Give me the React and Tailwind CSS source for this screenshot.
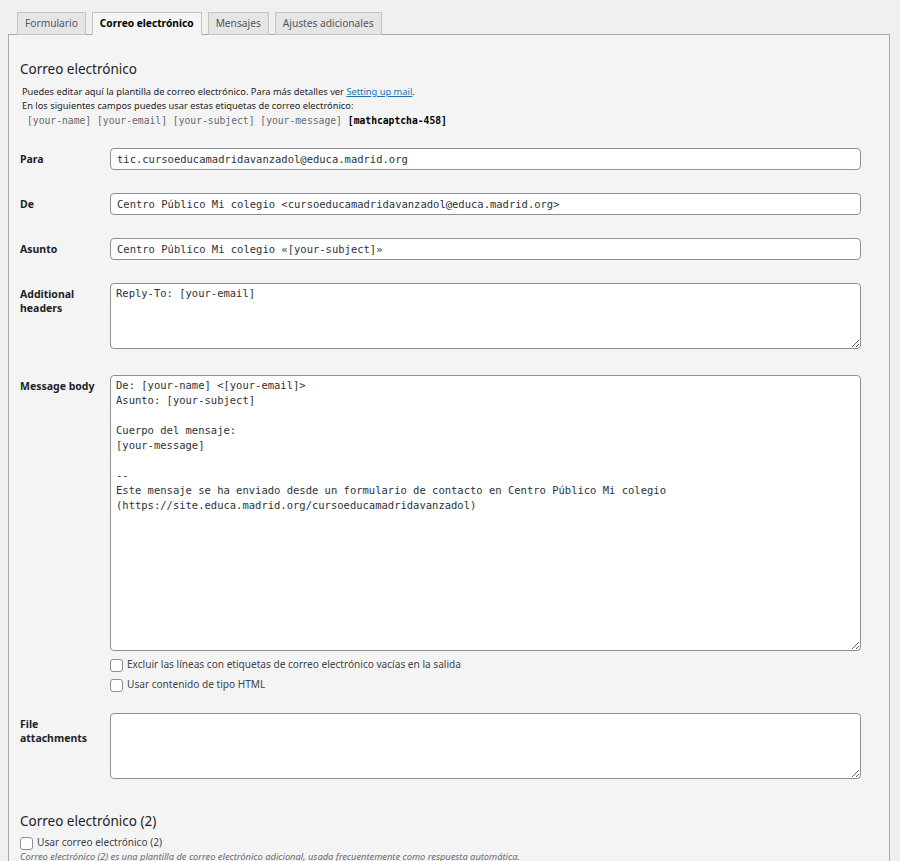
import React from "react";

const sans = { fontFamily: '"Noto Sans", "Open Sans", sans-serif' };
const mono = { fontFamily: '"DejaVu Sans Mono", "Liberation Mono", monospace' };

const tabs = ["Formulario", "Correo electrónico", "Mensajes", "Ajustes adicionales"];

const Field = ({ label, children, className = "" }) => (
  <div className={"flex " + className}>
    <div className="w-[90px] shrink-0 text-[10.5px] font-bold text-[#1d2327] leading-[14px] pt-[4px]">{label}</div>
    <div className="flex-1">{children}</div>
  </div>
);

const TextInput = ({ value }) => (
  <input
    readOnly
    defaultValue={value}
    style={mono}
    className="block w-full h-[22px] px-[6px] border border-[#8c8f94] rounded-[4px] bg-white text-[10.5px] text-[#2c3338] outline-none"
  />
);

const Area = ({ value, h }) => (
  <textarea
    readOnly
    defaultValue={value}
    style={mono}
    className={"block w-full px-[5px] pt-[2px] border border-[#8c8f94] rounded-[4px] bg-white text-[10.5px] leading-[15px] text-[#2c3338] outline-none " + h}
  />
);

const Check = ({ label }) => (
  <label className="flex items-center h-[14px] gap-[4px] text-[10.1px] text-[#3c434a]">
    <span className="w-[13px] h-[13px] rounded-[3px] border border-[#8c8f94] bg-white" />
    {label}
  </label>
);

const body = `De: [your-name] <[your-email]>
Asunto: [your-subject]

Cuerpo del mensaje:
[your-message]

-- 
Este mensaje se ha enviado desde un formulario de contacto en Centro Público Mi colegio
(https://site.educa.madrid.org/cursoeducamadridavanzadol)`;

export default function App() {
  return (
    <div style={sans} className="bg-[#f0f0f1] h-[861px] overflow-hidden pl-[8px] pr-[10px] pt-[12px]">
      <div className="flex gap-[6px] pl-[9px] relative z-10 -mb-px">
        {tabs.map((t, i) => (
          <div
            key={t}
            className={
              "h-[23px] px-[7px] flex items-center text-[10.2px] border border-[#c3c4c7] " +
              (i === 1
                ? "bg-[#f5f5f5] border-[#a7aaad] border-b-[#f5f5f5] font-bold text-black"
                : "bg-[#e5e5e5] text-[#50575e]")
            }
          >
            {t}
          </div>
        ))}
      </div>
      <div className="border border-[#a7aaad] bg-[#f4f4f4] pl-[11px] pr-[28px] pt-[24px] h-[900px]">
        <h2 className="text-[13.5px] text-[#1d2327] leading-[20px]">Correo electrónico</h2>
        <div className="mt-[6px] pl-[2px] text-[9.3px] leading-[14px] text-[#1d2327]">
          <p>
            Puedes editar aquí la plantilla de correo electrónico. Para más detalles ver{" "}
            <a className="text-[#2271b1] underline">Setting up mail</a>.
          </p>
          <p>En los siguientes campos puedes usar estas etiquetas de correo electrónico:</p>
          <p style={mono} className="text-[9.7px] text-[#646970] pl-[5px] mt-[1px]">
            [your-name] [your-email] [your-subject] [your-message]{" "}
            <b className="text-black">[mathcaptcha-458]</b>
          </p>
        </div>

        <Field label="Para" className="mt-[20px]">
          <TextInput value="tic.cursoeducamadridavanzadol@educa.madrid.org" />
        </Field>
        <Field label="De" className="mt-[23px]">
          <TextInput value="Centro Público Mi colegio <cursoeducamadridavanzadol@educa.madrid.org>" />
        </Field>
        <Field label="Asunto" className="mt-[23px]">
          <TextInput value="Centro Público Mi colegio «[your-subject]»" />
        </Field>
        <Field label={<>Additional<br />headers</>} className="mt-[23px]">
          <Area value="Reply-To: [your-email]" h="h-[66px]" />
        </Field>
        <Field label="Message body" className="mt-[26px]">
          <Area value={body} h="h-[276px]" />
          <div className="mt-[7px] flex flex-col gap-[6px]">
            <Check label="Excluir las líneas con etiquetas de correo electrónico vacías en la salida" />
            <Check label="Usar contenido de tipo HTML" />
          </div>
        </Field>
        <Field label={<>File<br />attachments</>} className="mt-[21px]">
          <Area value="" h="h-[66px]" />
        </Field>

        <h2 className="mt-[32px] text-[13.5px] text-[#1d2327] leading-[20px]">Correo electrónico (2)</h2>
        <div className="mt-[5px]">
          <Check label="Usar correo electrónico (2)" />
        </div>
        <p className="text-[9.3px] italic text-[#646970] leading-[14px]">
          Correo electrónico (2) es una plantilla de correo electrónico adicional, usada frecuentemente como respuesta automática.
        </p>
      </div>
    </div>
  );
}
